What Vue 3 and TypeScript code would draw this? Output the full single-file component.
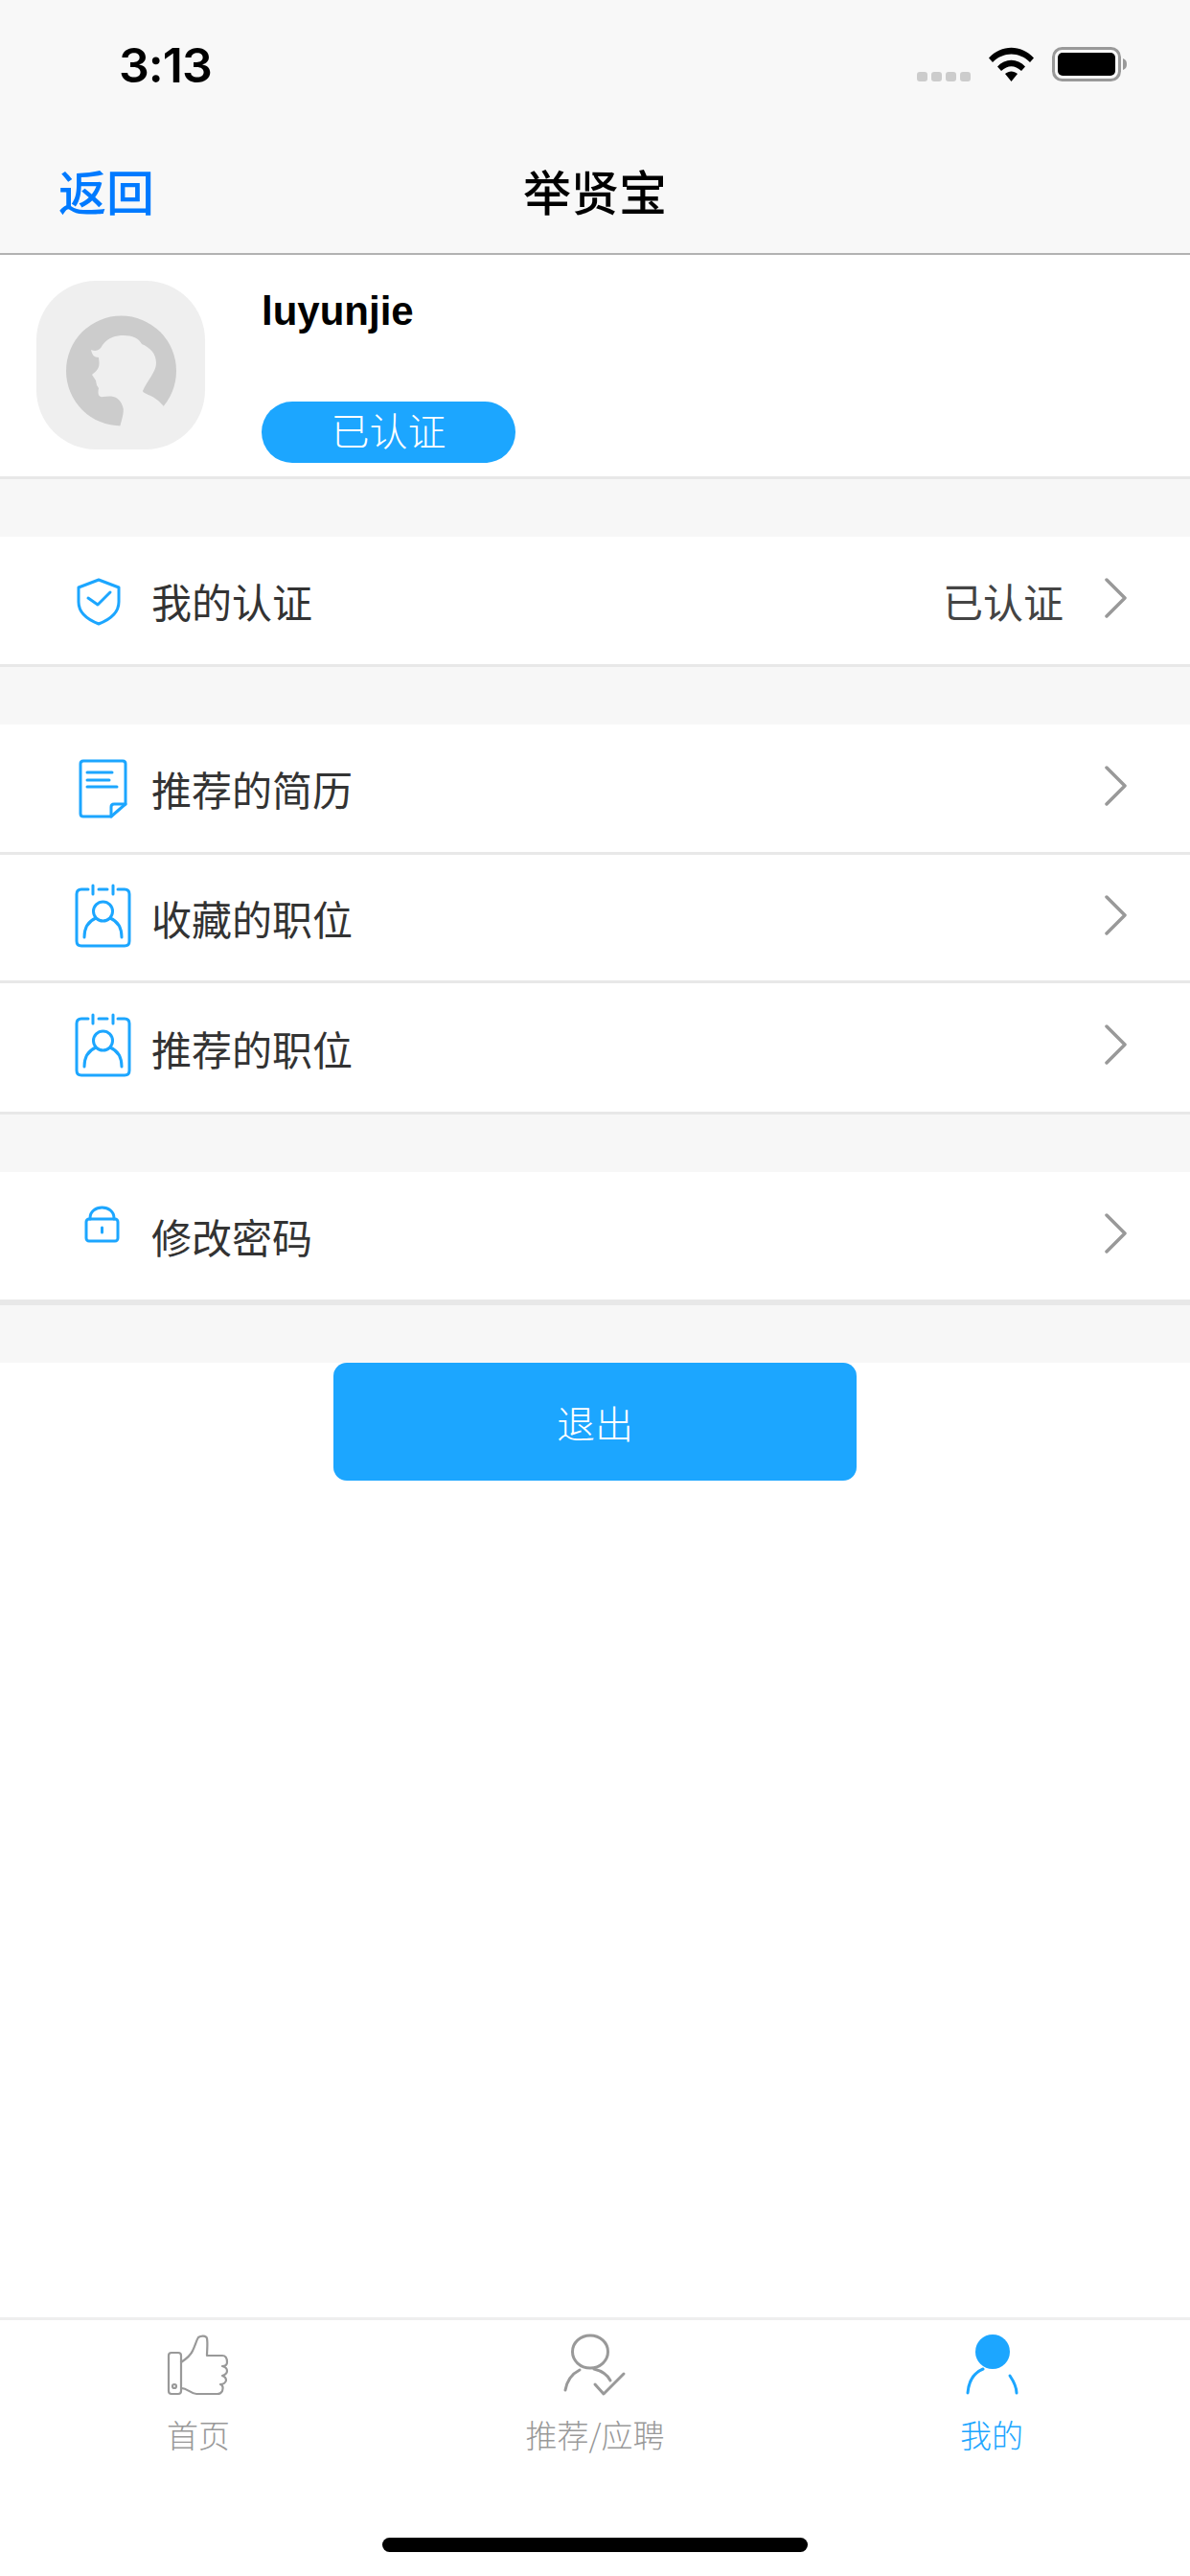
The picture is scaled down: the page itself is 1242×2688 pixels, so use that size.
<script setup lang="ts">
interface Row {
  icon: string
  label: string
  value?: string
  height: number
}
const authRows: Row[] = [{ icon: 'shield', label: '我的认证', value: '已认证', height: 133 }]
const listRows: Row[] = [
  { icon: 'doc', label: '推荐的简历', height: 133 },
  { icon: 'badge', label: '收藏的职位', height: 131 },
  { icon: 'badge', label: '推荐的职位', height: 134 }
]
const groups: Row[][] = [authRows, listRows]
</script>

<template>
  <div class="page">
    <header class="header">
      <div class="status">
        <span class="time">3:13</span>
        <div class="status-icons">
          <div class="dots"><i></i><i></i><i></i><i></i></div>
          <svg class="wifi" width="47" height="36" viewBox="0 0 47 36">
            <path d="M0 11.5C13-3 34-3 47 11.5L43 16C32 4.500 15 4.500 4 16Z" fill="#000" />
            <path d="M9 20.500C17 11.500 30 11.500 38 20.500L34 25C27 18.500 20 18.500 13 25Z" fill="#000" />
            <path d="M17 28C21 24.500 26 24.500 30 28L23.500 36Z" fill="#000" />
          </svg>
          <svg class="battery" width="79" height="36" viewBox="0 0 79 36">
            <rect x="1.500" y="1.500" width="69" height="33" rx="9" fill="none" stroke="#999" stroke-width="3" />
            <rect x="6" y="6" width="60" height="24" rx="5" fill="#000" />
            <path d="M74 12C77 13 78 15 78 18S77 23 74 24Z" fill="#999" />
          </svg>
        </div>
      </div>
      <nav class="nav">
        <span class="back">返回</span>
        <span class="title">举贤宝</span>
      </nav>
    </header>

    <section class="profile">
      <svg class="avatar" width="176" height="176" viewBox="38 293 176 176">
        <rect x="38" y="293" width="176" height="176" rx="62" fill="#efefef" />
        <circle cx="126.500" cy="387" r="57.500" fill="#ccc" />
        <path
          d="M95 365C100 367 104 366 107 360C113 352 121 350 129 350C138 350 145 353 148 359C157 363 163 369 163 379C163 388 153 398 149 408C150 412 160 411 170 423L190 446L125 446C128 435 130 428 128 424C124 412 115 413 108 414C102 415 102 410 103 405L101 402L100 397L96 391C101 387 104 384 103.500 378L103 373C98 373 96 370 95 365Z"
          fill="#efefef"
        />
      </svg>
      <div class="info">
        <div class="name">luyunjie</div>
        <div class="pill">已认证</div>
      </div>
    </section>

    <template v-for="(group, g) in groups" :key="g">
      <div class="gap"></div>
      <div
        v-for="row in group"
        :key="row.label"
        class="row"
        :style="{ height: row.height + 'px' }"
      >
        <svg class="row-icon" width="88" height="80" viewBox="0 0 88 80">
          <g v-if="row.icon === 'shield'" fill="none" stroke="#1ca6ff" stroke-width="3" stroke-linejoin="round" stroke-linecap="round">
            <path d="M33 18L54 26V41C54 52 46 59 33 64C20 59 12 52 12 41V26Z" />
            <path d="M22 37L32 44L45 31" />
          </g>
          <g v-else-if="row.icon === 'doc'" fill="none" stroke="#1ca6ff" stroke-width="3" stroke-linejoin="round" stroke-linecap="round">
            <path d="M17 11H58Q61 11 61 14V56L46 69H17Q14 69 14 66V14Q14 11 17 11Z" />
            <path d="M46 69V59Q46 56 49 56H61" />
            <path d="M21 23H47M21 31H44M21 38H52" />
          </g>
          <g v-else-if="row.icon === 'badge'" fill="none" stroke="#1ca6ff" stroke-width="3" stroke-linejoin="round" stroke-linecap="round">
            <path d="M22 10H15Q10 10 10 15V64Q10 69 15 69H60Q65 69 65 64V15Q65 10 60 10H53" />
            <path d="M27 6V15M48 6V15M33 10H42" />
            <circle cx="37.500" cy="33" r="10" />
            <path d="M18 60C18 49 23 43 30 40M57 60C57 49 52 43 45 40" />
          </g>
          <g v-else fill="none" stroke="#1ca6ff" stroke-width="3" stroke-linejoin="round" stroke-linecap="round">
            <rect x="20" y="21" width="33" height="25" rx="3" />
            <path d="M24 21V20C24 13 30 10 36.500 10C43 10 49 13 49 20V21" />
            <path d="M36.500 31V36" />
          </g>
        </svg>
        <span class="row-label">{{ row.label }}</span>
        <span v-if="row.value" class="row-value">{{ row.value }}</span>
        <svg class="chevron" width="24" height="42" viewBox="0 0 24 42">
          <path d="M2 2L21 21L2 40" fill="none" stroke="#999" stroke-width="3.500" stroke-linecap="round" stroke-linejoin="round" />
        </svg>
      </div>
    </template>

    <div class="gap"></div>
    <div class="row row-last">
      <svg class="row-icon" width="88" height="80" viewBox="0 0 88 80">
        <g fill="none" stroke="#1ca6ff" stroke-width="3" stroke-linejoin="round" stroke-linecap="round">
          <rect x="20" y="22" width="33" height="23" rx="3" />
          <path d="M24 22V21C24 14 30 10 36.500 10C43 10 49 14 49 21V22" />
          <path d="M36.500 31V36" />
        </g>
      </svg>
      <span class="row-label">修改密码</span>
      <svg class="chevron" width="24" height="42" viewBox="0 0 24 42">
        <path d="M2 2L21 21L2 40" fill="none" stroke="#999" stroke-width="3.500" stroke-linecap="round" stroke-linejoin="round" />
      </svg>
    </div>
    <div class="gap"></div>

    <button class="logout" type="button">退出</button>

    <footer class="footer">
      <div class="tabs">
        <div class="tab">
          <svg width="70" height="75" viewBox="172 2430 70 75">
            <g fill="none" stroke="#999" stroke-width="2.200" stroke-linejoin="round" stroke-linecap="round">
              <rect x="176" y="2455" width="13" height="43" rx="3" />
              <circle cx="182" cy="2490" r="2" />
              <path d="M189 2465C195 2461 199 2458 201 2453C204 2447 205 2442 207 2439C210 2437 215 2437 216 2440C217 2446 216 2452 216 2458H232C236 2458 237 2461 237 2465C237 2468 235 2469 232 2469C236 2470 237 2472 237 2474C237 2477 235 2478 232 2479C235 2480 236 2482 236 2484C235 2487 233 2488 230 2488C233 2489 233 2492 232 2495C231 2497 229 2498 227 2498H205C199 2498 196 2492 189 2492" />
            </g>
          </svg>
          <span class="tab-label">首页</span>
        </div>
        <div class="tab">
          <svg width="70" height="75" viewBox="586 2430 70 75">
            <g fill="none" stroke="#999" stroke-width="3" stroke-linejoin="round" stroke-linecap="round">
              <ellipse cx="616" cy="2454" rx="18.500" ry="17" />
              <path d="M590 2494C592 2483 597 2477 605 2473" />
              <path d="M620 2472C628 2474 634 2478 637 2484" />
              <path d="M621 2488L630 2498L651 2477" />
            </g>
          </svg>
          <span class="tab-label">推荐/应聘</span>
        </div>
        <div class="tab tab-active">
          <svg width="70" height="75" viewBox="1000 2430 70 75">
            <ellipse cx="1036" cy="2454" rx="18" ry="18" fill="#1ca6ff" />
            <g fill="none" stroke="#1ca6ff" stroke-width="3" stroke-linecap="round">
              <path d="M1010 2497C1011 2485 1016 2476 1026 2472" />
              <path d="M1054 2479C1058 2485 1061 2490 1061 2497" />
            </g>
          </svg>
          <span class="tab-label">我的</span>
        </div>
      </div>
      <div class="home-bar"></div>
    </footer>
  </div>
</template>

<style>
html,
body {
  margin: 0;
  background: #fff;
}
</style>

<style scoped>
.page {
  width: 1242px;
  height: 2688px;
  display: flex;
  flex-direction: column;
  overflow: hidden;
  background: #fff;
  font-family: "Noto Sans CJK SC", "Liberation Sans", sans-serif;
}
.header {
  height: 266px;
  box-sizing: border-box;
  flex: none;
  background: #f8f8f8;
  border-bottom: 2px solid #b2b2b2;
}
.status {
  height: 132px;
  box-sizing: border-box;
  padding: 49px 65px 0 124px;
  display: flex;
  justify-content: space-between;
  align-items: flex-start;
}
.time {
  font-family: Inter, "Liberation Sans", sans-serif;
  font-size: 50px;
  font-weight: 600;
  line-height: 38px;
  letter-spacing: -1px;
  color: #000;
}
.status-icons {
  display: flex;
  align-items: flex-start;
}
.dots {
  display: flex;
  gap: 4px;
  margin-top: 26px;
  margin-right: 19px;
}
.dots i {
  display: block;
  width: 11px;
  height: 10px;
  border-radius: 3px;
  background: #ccc;
}
.wifi {
  margin-right: 19px;
}
.nav {
  height: 132px;
  position: relative;
  display: flex;
  align-items: center;
  justify-content: center;
}
.back {
  position: absolute;
  left: 61px;
  font-size: 50px;
  font-weight: 500;
  color: #007aff;
}
.title {
  font-size: 50px;
  font-weight: 500;
  color: #000;
}
.profile {
  height: 234px;
  box-sizing: border-box;
  flex: none;
  padding: 27px 0 14px 38px;
  display: flex;
  background: #fff;
  border-bottom: 3px solid #e8e8e8;
}
.avatar {
  flex: none;
}
.info {
  margin-left: 59px;
  display: flex;
  flex-direction: column;
  justify-content: space-between;
}
.name {
  margin-top: 8px;
  font-family: "Liberation Sans", sans-serif;
  font-size: 42px;
  font-weight: 700;
  line-height: 48px;
  color: #000;
}
.pill {
  width: 265px;
  height: 64px;
  border-radius: 32px;
  background: #1ca6ff;
  color: #fff;
  font-size: 40px;
  font-weight: 300;
  line-height: 58px;
  text-align: center;
}
.gap {
  height: 60px;
  flex: none;
  background: #f7f7f7;
}
.row {
  flex: none;
  box-sizing: content-box;
  display: flex;
  align-items: center;
  padding-left: 70px;
  padding-right: 65px;
  background: #fff;
  border-bottom: 3px solid #e8e8e8;
}
.row-last {
  height: 133px;
  border-bottom-width: 6px;
}
.row-icon {
  flex: none;
}
.row-label {
  flex: 1;
  font-size: 42px;
  font-weight: 400;
  color: #333;
}
.row-value {
  margin-right: 43px;
  font-size: 42px;
  color: #444;
}
.chevron {
  flex: none;
  margin-bottom: 6px;
}
.logout {
  flex: none;
  align-self: center;
  width: 546px;
  height: 123px;
  padding: 0;
  border: none;
  border-radius: 14px;
  background: #1ca6ff;
  color: #fff;
  font-family: inherit;
  font-size: 40px;
  font-weight: 300;
}
.footer {
  margin-top: auto;
  flex: none;
  height: 270px;
  box-sizing: border-box;
  border-top: 3px solid #eee;
  display: flex;
  flex-direction: column;
  align-items: center;
}
.tabs {
  align-self: stretch;
  display: grid;
  grid-template-columns: repeat(3, 1fr);
  padding-top: 9px;
}
.tab {
  display: flex;
  flex-direction: column;
  align-items: center;
  color: #999;
}
.tab-active {
  color: #1ca6ff;
}
.tab-label {
  margin-top: 15px;
  font-size: 33px;
  line-height: 40px;
  font-weight: 300;
}
.home-bar {
  margin-top: 88px;
  width: 444px;
  height: 15px;
  border-radius: 8px;
  background: #000;
}
</style>
